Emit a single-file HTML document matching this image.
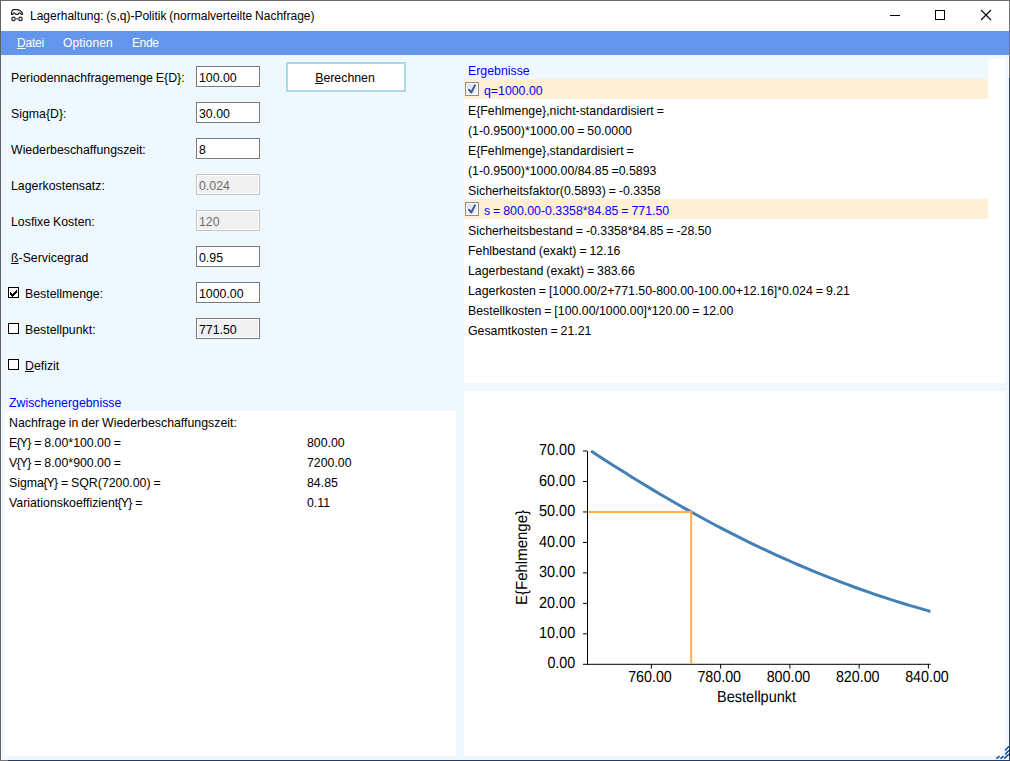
<!DOCTYPE html>
<html lang="de">
<head>
<meta charset="utf-8">
<title>Lagerhaltung: (s,q)-Politik (normalverteilte Nachfrage)</title>
<style>
*{box-sizing:border-box;margin:0;padding:0}
html,body{width:1010px;height:761px;overflow:hidden;background:#f0f8ff}
body{position:relative;font-family:"Liberation Sans",Arial,sans-serif;font-size:12.33px;color:#000;line-height:20px;word-spacing:-0.5px}
.abs{position:absolute}
#win{position:absolute;left:0;top:0;width:1010px;height:761px;background:#f0f8ff;overflow:hidden}
#titlebar{position:absolute;left:1px;top:1px;width:1008px;height:30px;background:#fff}
#title{position:absolute;left:30px;top:6px;font-size:12px;line-height:20px;white-space:nowrap;letter-spacing:0.01px}
#menubar{position:absolute;left:1px;top:31px;width:1008px;height:24px;background:#6495ed}
.menu{position:absolute;top:2px;font-size:12px;line-height:20px;color:#fff;white-space:nowrap}
.lbl{position:absolute;left:11px;white-space:nowrap;line-height:20px;margin-top:1px}
.inp{position:absolute;left:196px;width:64px;height:21px;border:1px solid #7a7a7a;background:#fff;padding-left:2px;padding-top:2px;line-height:19px;white-space:nowrap}
.inp.dis{border-color:#c4c4c4;color:#6d6d6d;background:#fff}
.inp.dis:before{content:"";position:absolute;left:1px;top:1px;right:1px;bottom:1px;background:#f0f0f0;z-index:0}
.inp span{position:relative;z-index:1}
.cb{position:absolute;left:8px;width:11px;height:11px;border:1px solid #000;background:#fff}
.cblbl{position:absolute;left:25px;white-space:nowrap;line-height:20px;margin-top:1px}
u{text-decoration:underline;text-underline-offset:1px}
#btn{position:absolute;left:286px;top:62px;width:120px;height:30px;border:2px solid #add8e6;background:#fff;text-align:center;line-height:28px;padding-right:2px}
.hdr{position:absolute;color:#0000ff;white-space:nowrap;line-height:20px}
.panel{position:absolute;background:#fff}
.row{position:absolute;left:0;height:20px;line-height:20px;white-space:nowrap;padding-top:2px}
.row.hl{background:#ffefd5;color:#0000ff}
.lcb{position:absolute;left:1px;top:3px;width:14px;height:14px;border:1px solid #8e8f8f;background:linear-gradient(135deg,#d6dae2 0%,#eef0f2 55%,#f6f6f6 100%);box-shadow:inset 0 0 0 1px #f4f4f4}
svg{position:absolute;left:0;top:0;overflow:visible}
svg text{font-family:"Liberation Sans",Arial,sans-serif}
</style>
</head>
<body>
<div id="win">
  <div id="titlebar"></div>
  <div id="title">Lagerhaltung: (s,q)-Politik (normalverteilte Nachfrage)</div>
  <div id="menubar">
    <div class="menu" style="left:16px;letter-spacing:-0.2px"><u>D</u>atei</div>
    <div class="menu" style="left:62px;letter-spacing:0.15px">Optionen</div>
    <div class="menu" style="left:131px;letter-spacing:-0.4px">Ende</div>
  </div>

  <!-- form -->
  <div class="lbl" style="top:67px">Periodennachfragemenge E{D}:</div>
  <div class="lbl" style="top:103px">Sigma{D}:</div>
  <div class="lbl" style="top:139px">Wiederbeschaffungszeit:</div>
  <div class="lbl" style="top:175px">Lagerkostensatz:</div>
  <div class="lbl" style="top:211px">Losfixe Kosten:</div>
  <div class="lbl" style="top:247px"><u>ß</u>-Servicegrad</div>
  <div class="cb" style="top:287px"><svg width="11" height="11" viewBox="0 0 11 11" style="left:-1px;top:-1px" shape-rendering="crispEdges"><path d="M2 5h1v3h-1zM3 6h1v3h-1zM4 7h1v3h-1zM5 6h1v3h-1zM6 5h1v3h-1zM7 4h1v3h-1zM8 3h1v3h-1z" fill="#000"/></svg></div>
  <div class="cblbl" style="top:283px">Bestellmenge:</div>
  <div class="cb" style="top:323px"></div>
  <div class="cblbl" style="top:319px">Bestellpunkt:</div>
  <div class="cb" style="top:359px"></div>
  <div class="cblbl" style="top:355px"><u>D</u>efizit</div>

  <div class="inp" style="top:66px"><span>100.00</span></div>
  <div class="inp" style="top:102px"><span>30.00</span></div>
  <div class="inp" style="top:138px"><span>8</span></div>
  <div class="inp dis" style="top:174px"><span>0.024</span></div>
  <div class="inp dis" style="top:210px"><span>120</span></div>
  <div class="inp" style="top:246px"><span>0.95</span></div>
  <div class="inp" style="top:282px"><span>1000.00</span></div>
  <div class="inp dis" style="top:318px;color:#000;border-color:#7a7a7a"><span>771.50</span></div>

  <div id="btn"><u>B</u>erechnen</div>

  <!-- Zwischenergebnisse -->
  <div class="hdr" style="left:9px;top:393px">Zwischenergebnisse</div>
  <div class="panel" id="zw" style="left:5px;top:411px;width:451px;height:345px">
    <div class="row" style="top:0;left:4px">Nachfrage in der Wiederbeschaffungszeit:</div>
    <div class="row" style="top:20px;left:4px"><span style="letter-spacing:-0.8px">E{Y</span>} = 8.00*100.00 =</div>
    <div class="row" style="top:40px;left:4px"><span style="letter-spacing:-0.8px">V{Y</span>} = 8.00*900.00 =</div>
    <div class="row" style="top:60px;left:4px">Sigm<span style="letter-spacing:-0.8px">a{Y</span>} = SQR(7200.00) =</div>
    <div class="row" style="top:80px;left:4px">Variationskoeffizien<span style="letter-spacing:-0.8px">t{Y</span>} =</div>
    <div class="row" style="top:20px;left:302px">800.00</div>
    <div class="row" style="top:40px;left:302px">7200.00</div>
    <div class="row" style="top:60px;left:302px">84.85</div>
    <div class="row" style="top:80px;left:302px">0.11</div>
  </div>

  <!-- Ergebnisse -->
  <div class="panel" id="erg" style="left:464px;top:59px;width:541px;height:324px">
    <div class="abs" style="left:0;top:0;width:524px;height:20px;background:#f0f8ff"></div>
    <div class="hdr" style="left:4px;top:2px">Ergebnisse</div>
    <div class="row hl" style="top:20px;width:524px;padding-left:20px"><span class="lcb"><svg width="14" height="14" viewBox="0 0 14 14" style="left:-1px;top:-1px"><path d="M4 7.7L6.3 10.5L9.9 3.4" stroke="#40549a" stroke-width="2" fill="none" stroke-linecap="round" stroke-linejoin="round"/></svg></span>q=1000.00</div>
    <div class="row" style="top:40px;padding-left:4px">E{Fehlmenge},nicht-standardisiert =</div>
    <div class="row" style="top:60px;padding-left:4px">(1-0.9500)*1000.00 = 50.0000</div>
    <div class="row" style="top:80px;padding-left:4px">E{Fehlmenge},standardisiert =</div>
    <div class="row" style="top:100px;padding-left:4px">(1-0.9500)*1000.00/84.85 =0.5893</div>
    <div class="row" style="top:120px;padding-left:4px">Sicherheitsfaktor(0.5893) = -0.3358</div>
    <div class="row hl" style="top:140px;width:524px;padding-left:20px"><span class="lcb"><svg width="14" height="14" viewBox="0 0 14 14" style="left:-1px;top:-1px"><path d="M4 7.7L6.3 10.5L9.9 3.4" stroke="#40549a" stroke-width="2" fill="none" stroke-linecap="round" stroke-linejoin="round"/></svg></span>s = 800.00-0.3358*84.85 = 771.50</div>
    <div class="row" style="top:160px;padding-left:4px">Sicherheitsbestand = -0.3358*84.85 = -28.50</div>
    <div class="row" style="top:180px;padding-left:4px">Fehlbestand (exakt) = 12.16</div>
    <div class="row" style="top:200px;padding-left:4px">Lagerbestand (exakt) = 383.66</div>
    <div class="row" style="top:220px;padding-left:4px">Lagerkosten = [1000.00/2+771.50-800.00-100.00+12.16]*0.024 = 9.21</div>
    <div class="row" style="top:240px;padding-left:4px">Bestellkosten = [100.00/1000.00]*120.00 = 12.00</div>
    <div class="row" style="top:260px;padding-left:4px">Gesamtkosten = 21.21</div>
  </div>

  <!-- Chart -->
  <div class="panel" id="chart" style="left:464px;top:391px;width:541px;height:365px"></div>
  <svg id="chartsvg" width="1010" height="761" viewBox="0 0 1010 761">
    <g stroke="#000" stroke-width="1" fill="none">
      <path d="M587.5 450.5 V664.8" shape-rendering="crispEdges"/>
      <path d="M583 664.3 H930.7"/>
      <path d="M583 633.83H587 M583 603.36H587 M583 572.89H587 M583 542.42H587 M583 511.95H587 M583 481.48H587 M583 451.01H587"/>
      <path d="M651.40 664.3V668.6 M720.65 664.3V668.6 M789.90 664.3V668.6 M859.15 664.3V668.6 M928.40 664.3V668.6"/>
    </g>
    <path id="curve" d="M591.0 450.9 L597.9 455.4 L604.8 459.9 L611.8 464.4 L618.7 468.8 L625.6 473.1 L632.5 477.5 L639.5 481.7 L646.4 485.9 L653.3 490.1 L660.2 494.2 L667.2 498.3 L674.1 502.3 L681.0 506.2 L687.9 510.1 L694.9 514.0 L701.8 517.8 L708.7 521.5 L715.6 525.2 L722.6 528.8 L729.5 532.4 L736.4 535.9 L743.3 539.4 L750.3 542.8 L757.2 546.1 L764.1 549.4 L771.0 552.6 L778.0 555.8 L784.9 558.9 L791.8 562.0 L798.7 565.0 L805.7 567.9 L812.6 570.8 L819.5 573.7 L826.4 576.4 L833.4 579.1 L840.3 581.8 L847.2 584.4 L854.1 587.0 L861.1 589.5 L868.0 591.9 L874.9 594.3 L881.8 596.6 L888.8 598.9 L895.7 601.1 L902.6 603.2 L909.5 605.4 L916.5 607.4 L923.4 609.4 L930.3 611.4 L930.5 611.4" stroke="#4380b6" stroke-width="3" fill="none" stroke-linejoin="round"/>
    <path d="M588 512 H691.2 V663.8" stroke="#ffae4e" stroke-width="2" fill="none"/>
    <g font-size="16" fill="#000" text-anchor="end" text-rendering="geometricPrecision">
      <text x="575.2" y="668" textLength="27.8" lengthAdjust="spacingAndGlyphs">0.00</text>
      <text x="575.2" y="638" textLength="36.2" lengthAdjust="spacingAndGlyphs">10.00</text>
      <text x="575.2" y="608" textLength="36.2" lengthAdjust="spacingAndGlyphs">20.00</text>
      <text x="575.2" y="577" textLength="36.2" lengthAdjust="spacingAndGlyphs">30.00</text>
      <text x="575.2" y="547" textLength="36.2" lengthAdjust="spacingAndGlyphs">40.00</text>
      <text x="575.2" y="516" textLength="36.2" lengthAdjust="spacingAndGlyphs">50.00</text>
      <text x="575.2" y="486" textLength="36.2" lengthAdjust="spacingAndGlyphs">60.00</text>
      <text x="575.2" y="455" textLength="36.2" lengthAdjust="spacingAndGlyphs">70.00</text>
    </g>
    <g font-size="16" fill="#000" text-anchor="middle" text-rendering="geometricPrecision">
      <text x="650.0" y="682" textLength="43.6" lengthAdjust="spacingAndGlyphs">760.00</text>
      <text x="719.2" y="682" textLength="43.6" lengthAdjust="spacingAndGlyphs">780.00</text>
      <text x="788.5" y="682" textLength="43.6" lengthAdjust="spacingAndGlyphs">800.00</text>
      <text x="857.7" y="682" textLength="43.6" lengthAdjust="spacingAndGlyphs">820.00</text>
      <text x="927.0" y="682" textLength="43.6" lengthAdjust="spacingAndGlyphs">840.00</text>
      <text x="756.6" y="702" textLength="79" lengthAdjust="spacingAndGlyphs">Bestellpunkt</text>
      <text transform="translate(527 557.5) rotate(-90)" textLength="95" lengthAdjust="spacingAndGlyphs">E{Fehlmenge}</text>
    </g>
  </svg>
  <svg id="chrome" width="1010" height="761" viewBox="0 0 1010 761">
    <g shape-rendering="crispEdges">
      <rect x="0" y="0" width="1010" height="1" fill="#6a6a6a"/>
      <rect x="0" y="0" width="1" height="761" fill="#626360"/>
      <rect x="1009" y="0" width="1" height="78" fill="#777"/>
      <rect x="1008" y="55" width="1" height="705" fill="#fbfdff"/>
      <rect x="1009" y="78" width="1" height="683" fill="#2a3c5e"/>
      <rect x="0" y="760" width="1010" height="1" fill="#27395c"/>
      <rect x="0" y="760" width="8" height="1" fill="#777"/>
    </g>
    <!-- window controls -->
    <g stroke="#000" stroke-width="1" fill="none">
      <path d="M890 15.5H900" shape-rendering="crispEdges"/>
      <rect x="935.5" y="10.5" width="9" height="9" shape-rendering="crispEdges"/>
      <path d="M981 10L991 20M991 10L981 20" stroke-width="1.1"/>
    </g>
    <!-- app icon -->
    <g stroke="#1e1e1e" stroke-width="1.15" fill="none" stroke-linecap="round" stroke-linejoin="round">
      <path d="M11.5 14.4V12.8C11.7 11.3 12.4 9.6 13.5 9.6H17.6C18.7 9.6 19.9 10.7 21.3 11.5C22.3 12.1 22.6 13 22.6 14.4H21.3C20.9 13.3 20.3 12.8 19.7 12.8C19 12.8 18.5 13.4 18.1 14.3H15.5C15.1 13.3 14.6 12.8 14 12.8C13.3 12.8 13 13.4 12.8 14.4Z"/>
      <circle cx="13.5" cy="18.9" r="1.7"/>
      <circle cx="20.5" cy="18.9" r="1.7"/>
      <path d="M15.4 18.9H18.6" stroke="#555" stroke-width="1.3" stroke-linecap="butt"/>
    </g>
    <!-- size grip -->
    <g stroke="#0a4fa5" stroke-width="1.5" fill="none">
      <path d="M996.2 758.6L999.6 756.2M1000.4 758.6L1003.6 756.2M1004.2 758.6L1009 754M1005 754.4L1009 750.2M1005 750.4L1009 746.2"/>
    </g>
  </svg>
</div>
</body>
</html>
